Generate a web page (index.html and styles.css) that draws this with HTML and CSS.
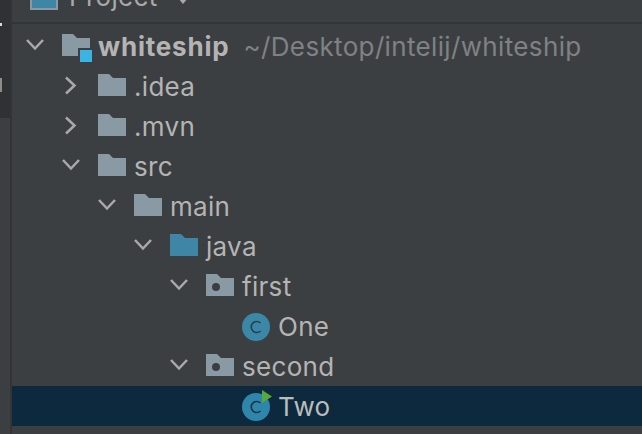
FILE: index.html
```html
<!DOCTYPE html>
<html lang="en">
<head>
    <meta charset="UTF-8">
    <title>Project</title>
    <link rel="stylesheet" href="styles.css">
</head>
<body>
    <div class="app">
        <div class="side-strip">
            <span class="side-dot"></span>
            <span class="side-mark"></span>
        </div>
        <div class="panel">
            <div class="panel-header">
                <svg class="project-icon" width="28" height="14" viewBox="0 0 28 14"><rect x="1" y="-6" width="26" height="19" fill="#3f86a6" stroke="#8a9aa5" stroke-width="2"/></svg>
                <span class="panel-title">Project</span>
                <svg class="header-caret" width="12" height="8" viewBox="0 0 12 8"><path d="M1 0 L6 6 L11 0 Z" fill="#a9a9a9"/></svg>
            </div>
            <ul class="tree">
                <li class="row level-0">
                    <svg class="arrow" viewBox="0 0 20 20"><path d="M3 4 L11 12.5 L19 4"/></svg>
                    <svg class="icon" viewBox="0 0 32 28"><path d="M2 2 H13 L17 6 H30 V24 H2 Z" fill="#8a9aa5"/><rect x="18" y="16" width="14" height="14" fill="#3c3f41"/><rect x="20" y="18" width="12" height="12" fill="#3db3e4"/></svg>
                    <span class="name bold">whiteship</span>
                    <span class="path">~/Desktop/intelij/whiteship</span>
                </li>
                <li class="row level-1">
                    <svg class="arrow" viewBox="0 0 20 20"><path d="M6 1.5 L14.5 9.5 L6 17.5"/></svg>
                    <svg class="icon" viewBox="0 0 32 28"><path d="M2 2 H13 L17 6 H30 V24 H2 Z" fill="#8a9aa5"/></svg>
                    <span class="name">.idea</span>
                </li>
                <li class="row level-1">
                    <svg class="arrow" viewBox="0 0 20 20"><path d="M6 1.5 L14.5 9.5 L6 17.5"/></svg>
                    <svg class="icon" viewBox="0 0 32 28"><path d="M2 2 H13 L17 6 H30 V24 H2 Z" fill="#8a9aa5"/></svg>
                    <span class="name">.mvn</span>
                </li>
                <li class="row level-1">
                    <svg class="arrow" viewBox="0 0 20 20"><path d="M3 4 L11 12.5 L19 4"/></svg>
                    <svg class="icon" viewBox="0 0 32 28"><path d="M2 2 H13 L17 6 H30 V24 H2 Z" fill="#8a9aa5"/></svg>
                    <span class="name">src</span>
                </li>
                <li class="row level-2">
                    <svg class="arrow" viewBox="0 0 20 20"><path d="M3 4 L11 12.5 L19 4"/></svg>
                    <svg class="icon" viewBox="0 0 32 28"><path d="M2 2 H13 L17 6 H30 V24 H2 Z" fill="#8a9aa5"/></svg>
                    <span class="name">main</span>
                </li>
                <li class="row level-3">
                    <svg class="arrow" viewBox="0 0 20 20"><path d="M3 4 L11 12.5 L19 4"/></svg>
                    <svg class="icon" viewBox="0 0 32 28"><path d="M2 2 H13 L17 6 H30 V24 H2 Z" fill="#3f86a6"/></svg>
                    <span class="name">java</span>
                </li>
                <li class="row level-4">
                    <svg class="arrow" viewBox="0 0 20 20"><path d="M3 4 L11 12.5 L19 4"/></svg>
                    <svg class="icon" viewBox="0 0 32 28"><path d="M2 2 H13 L17 6 H30 V24 H2 Z" fill="#8a9aa5"/><circle cx="12" cy="15" r="4" fill="#3c3f41"/></svg>
                    <span class="name">first</span>
                </li>
                <li class="row level-5">
                    <svg class="class-icon" viewBox="0 0 32 32"><circle cx="16" cy="17" r="14" fill="#3a87a8"/><path d="M20.5 13 A5.5 5.5 0 1 0 20.5 21" fill="none" stroke="#2b3f4a" stroke-width="1.6"/></svg>
                    <span class="name">One</span>
                </li>
                <li class="row level-4">
                    <svg class="arrow" viewBox="0 0 20 20"><path d="M3 4 L11 12.5 L19 4"/></svg>
                    <svg class="icon" viewBox="0 0 32 28"><path d="M2 2 H13 L17 6 H30 V24 H2 Z" fill="#8a9aa5"/><circle cx="12" cy="15" r="4" fill="#3c3f41"/></svg>
                    <span class="name">second</span>
                </li>
                <li class="row level-5 selected">
                    <svg class="class-icon" viewBox="0 0 32 32"><circle cx="16" cy="17" r="14" fill="#2f86ad"/><path d="M20.5 13 A5.5 5.5 0 1 0 20.5 21" fill="none" stroke="#1d3443" stroke-width="1.6"/><path d="M22 0 L32 6.5 L22 13 Z" fill="#59a83c"/></svg>
                    <span class="name">Two</span>
                </li>
            </ul>
        </div>
    </div>
</body>
</html>
```
FILE: styles.css
```css
html, body {
    margin: 0;
    padding: 0;
    height: 100%;
    overflow: hidden;
    background-color: #3c3f41;
}

.app {
    display: flex;
    width: 642px;
    height: 434px;
}

.side-strip {
    width: 10px;
    height: 118px;
    background-color: #2f3133;
    flex-shrink: 0;
    display: flex;
    flex-direction: column;
    align-items: flex-start;
    padding-top: 23px;
    box-sizing: border-box;
}

.side-dot {
    width: 2px;
    height: 3px;
    background-color: #d8d8d8;
}

.side-mark {
    width: 2px;
    height: 14px;
    margin-top: 52px;
    background-color: #8c8c8c;
}

.panel {
    flex: 1;
    border-left: 2px solid #323436;
    min-width: 0;
}

.panel-header {
    height: 22px;
    border-bottom: 2px solid #323436;
    display: flex;
    align-items: flex-end;
    overflow: hidden;
    padding-left: 18px;
    color: #a9a9a9;
    font-family: Inter, "Liberation Sans", sans-serif;
    font-size: 26px;
    letter-spacing: 0.3px;
}

.project-icon {
    margin-bottom: 12px;
}

.panel-title {
    margin-left: 11px;
    line-height: 30px;
    margin-bottom: 10px;
}

.header-caret {
    margin: 0 0 16px 20px;
}

.tree {
    list-style: none;
    margin: 2px 0 0;
    padding: 0;
}

.row {
    display: flex;
    align-items: center;
    height: 40px;
    color: #b4b4b4;
    font-family: Inter, "Liberation Sans", sans-serif;
    font-size: 26px;
    letter-spacing: 0.3px;
}

.level-0 { padding-left: 12px; }
.level-1 { padding-left: 48px; }
.level-2 { padding-left: 84px; }
.level-3 { padding-left: 120px; }
.level-4 { padding-left: 156px; }
.level-5 { padding-left: 228px; }

.arrow {
    width: 20px;
    height: 20px;
    margin-right: 16px;
    flex-shrink: 0;
}

.arrow path {
    fill: none;
    stroke: #a9a9a9;
    stroke-width: 2.5;
}

.icon {
    width: 32px;
    height: 28px;
    flex-shrink: 0;
    overflow: visible;
}

.class-icon {
    width: 32px;
    height: 32px;
    flex-shrink: 0;
}

.name {
    margin-left: 6px;
    white-space: nowrap;
}

.bold {
    font-weight: 700;
    letter-spacing: 0.8px;
}

.path {
    margin-left: 14px;
    color: #7f8284;
    white-space: nowrap;
    letter-spacing: 0.35px;
}

.selected {
    background-color: #0d293e;
}

.selected .name {
    color: #bcbcbc;
}
```
